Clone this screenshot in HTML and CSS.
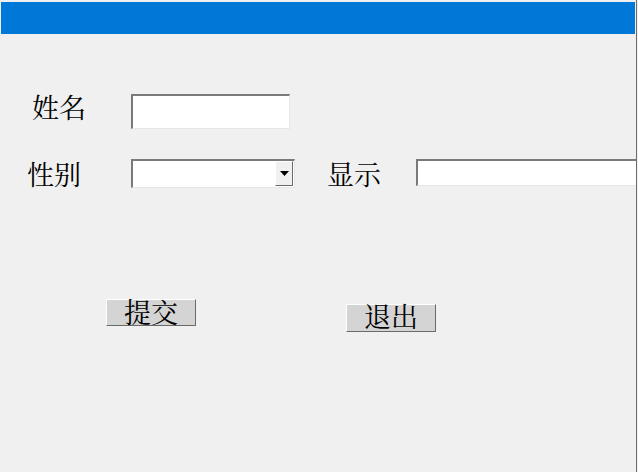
FILE: index.html
```html
<!DOCTYPE html>
<html lang="zh">
<head>
<meta charset="utf-8">
<link rel="stylesheet" href="styles.css">
</head>
<body>
<div class="window">
  <div class="titlebar"></div>
  <div class="form">
    <div class="row row-name">
      <span class="label label-name">姓名</span>
      <input class="field field-name" type="text">
    </div>
    <div class="row row-gender">
      <span class="label label-gender">性别</span>
      <div class="select">
        <span class="select-btn"><svg width="9" height="5" viewBox="0 0 9 5"><path d="M0 0H9L4.5 5Z" fill="#000"/></svg></span>
      </div>
      <span class="label label-show">显示</span>
      <input class="field field-show" type="text">
    </div>
    <div class="buttons">
      <button class="btn btn-submit">提交</button>
      <button class="btn btn-exit">退出</button>
    </div>
  </div>
</div>
</body>
</html>
```
FILE: styles.css
```css
html, body {
  margin: 0;
  padding: 0;
  background: #f0f0f0;
}
.window {
  width: 636px;
  height: 472px;
  border-right: 1px solid #6e6e6e;
  overflow: hidden;
  background: #f0f0f0;
  font-family: "Noto Serif CJK SC", "Noto Sans CJK SC", serif;
}
.titlebar {
  margin: 2px 1px 0 1px;
  height: 32px;
  background: #0078d7;
}
.form {
  padding-top: 60px;
}
.row {
  display: flex;
  align-items: flex-start;
}
.row > * {
  flex-shrink: 0;
}
.label {
  box-sizing: border-box;
  font-size: 27px;
  line-height: 27px;
  color: #000;
  white-space: nowrap;
}
.label-name {
  margin-left: 32px;
  width: 99px;
  margin-top: -1px;
}
.field {
  box-sizing: border-box;
  margin: 0;
  padding: 0;
  background: #fff;
  border-top: 2px solid #7a7a7a;
  border-left: 2px solid #7a7a7a;
  border-right: 1px solid #e6e6e6;
  border-bottom: 1px solid #e6e6e6;
  outline: none;
}
.field-name {
  width: 159px;
  height: 35px;
}
.row-gender {
  margin-top: 30px;
}
.label-gender {
  margin-left: 27px;
  width: 104px;
  margin-top: 1px;
}
.select {
  box-sizing: border-box;
  width: 164px;
  height: 29px;
  background: #fff;
  border-top: 2px solid #7a7a7a;
  border-left: 2px solid #7a7a7a;
  border-right: 1px solid #e6e6e6;
  border-bottom: 1px solid #e6e6e6;
  display: flex;
  justify-content: flex-end;
  align-items: stretch;
  padding: 0 1px 1px 0;
}
.select-btn {
  box-sizing: border-box;
  width: 18px;
  background: #f0f0f0;
  border-right: 1px solid #6a6a6a;
  border-bottom: 1px solid #6a6a6a;
  border-top: 1px solid #fff;
  border-left: 1px solid #fff;
  display: flex;
  align-items: center;
  justify-content: center;
}
.label-show {
  margin-left: 32px;
  width: 89px;
  margin-top: 1px;
}
.field-show {
  width: 240px;
  height: 27px;
}
.buttons {
  display: flex;
  align-items: flex-start;
  margin-top: 111px;
}
.btn {
  box-sizing: border-box;
  flex-shrink: 0;
  width: 90px;
  height: 27px;
  margin: 0;
  padding: 0 0 2px 0;
  background: #d4d4d4;
  border-top: 1px solid #fff;
  border-left: 1px solid #fff;
  border-right: 1px solid #6a6a6a;
  border-bottom: 1px solid #6a6a6a;
  font-family: "Noto Serif CJK SC", "Noto Sans CJK SC", serif;
  font-size: 27px;
  line-height: 25px;
  color: #000;
  overflow: visible;
  display: flex;
  align-items: center;
  justify-content: center;
}
.btn-submit {
  margin-left: 106px;
}
.btn-exit {
  margin-left: 150px;
  margin-top: 5px;
  height: 28px;
  line-height: 24px;
  padding-bottom: 4px;
}
```
